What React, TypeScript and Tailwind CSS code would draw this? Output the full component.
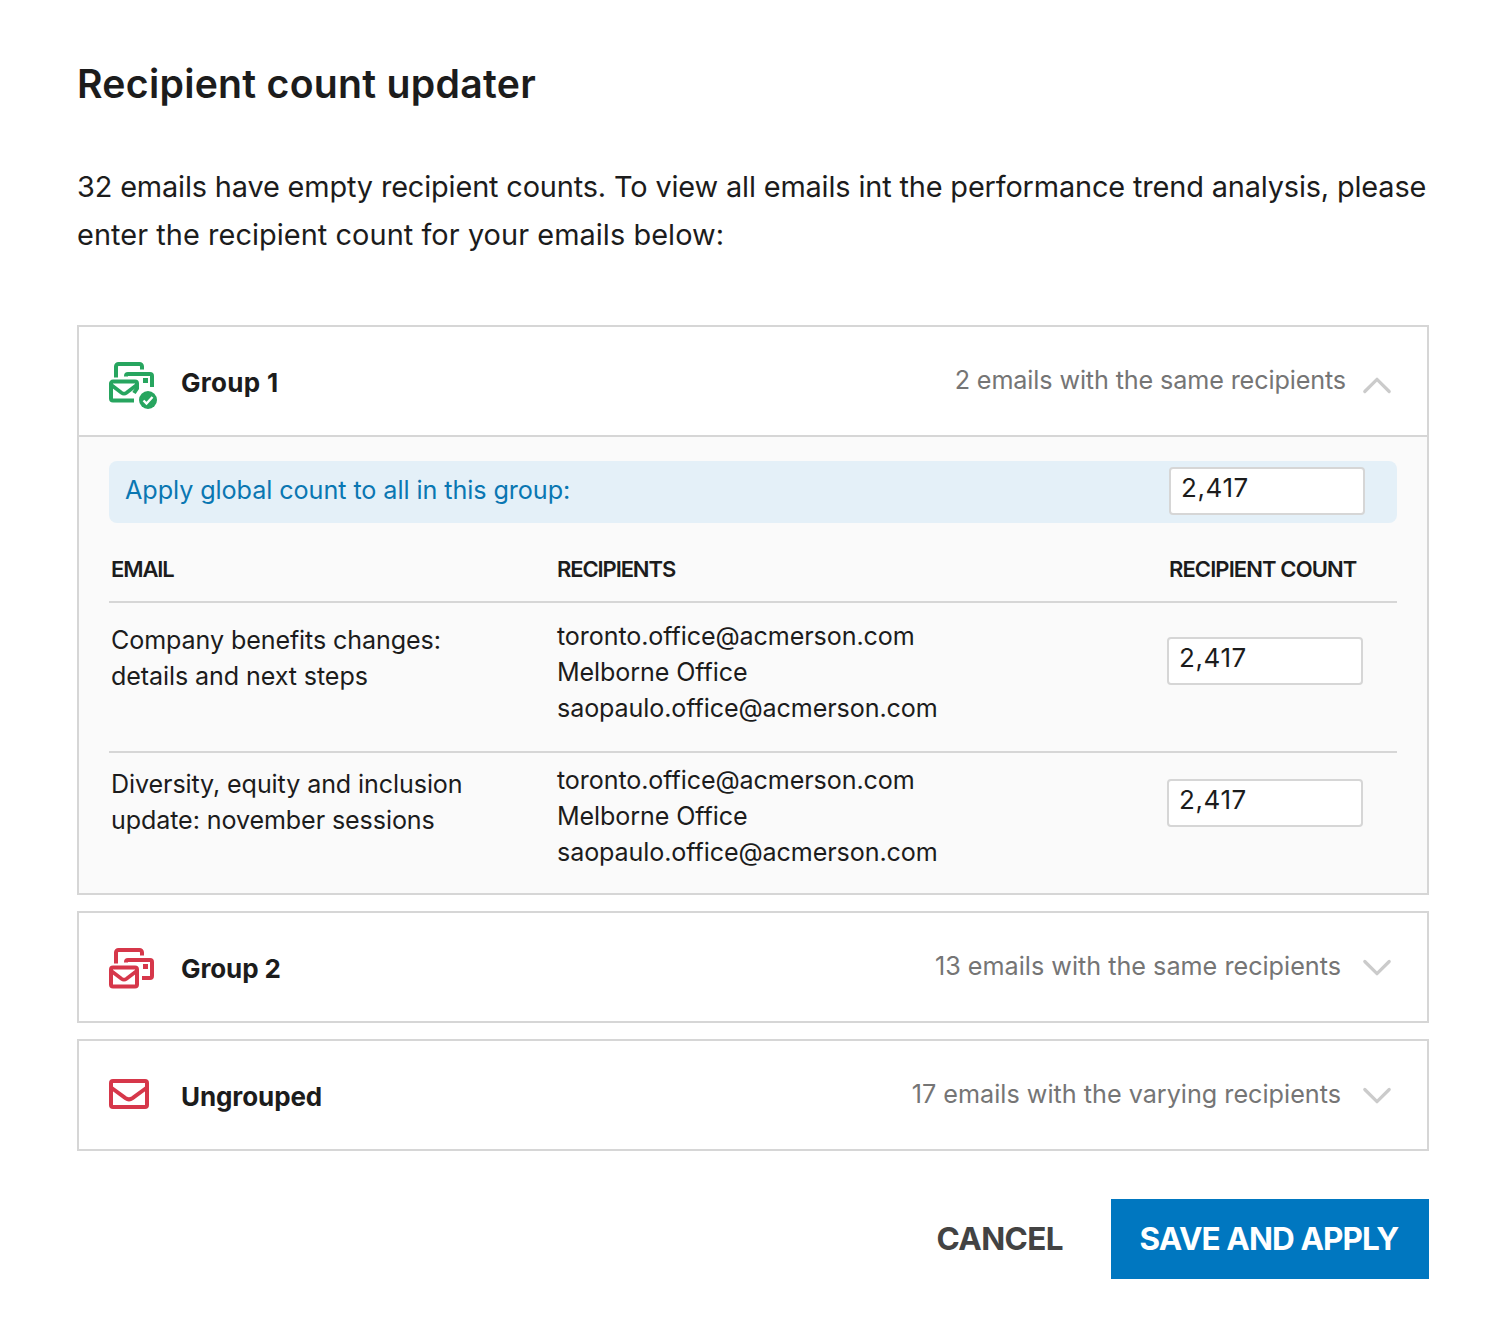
import React from "react";

const borderColor = "border-[#d6d6d6]"; // shared outline color

const recipients = [
  "toronto.office@acmerson.com",
  "Melborne Office",
  "saopaulo.office@acmerson.com",
];

const emails = [
  {
    title: ["Company benefits changes:", "details and next steps"],
    count: "2,417",
    row: "h-[150px] border-b-2 pt-[15px]",
    input: "mt-[19px]",
  },
  {
    title: ["Diversity, equity and inclusion", "update: november sessions"],
    count: "2,417",
    row: "h-[140px] pt-[9px]",
    input: "mt-[17px]",
  },
];

const MailStackIcon = ({ done = false }: { done?: boolean }) => (
  <svg
    width="50"
    height="48"
    viewBox="0 0 50 48"
    fill="none"
    stroke={done ? "#27a55f" : "#d6374a"}
    strokeWidth="4"
  >
    <path d="M7 15.5V4.5A2.5 2.5 0 0 1 9.500 2H30.500A2.500 2.500 0 0 1 33 4.500V7.500" />
    {done ? (
      <>
        <path d="M17 14.500V14A2 2 0 0 1 19 12H41A2 2 0 0 1 43 14V25" />
        <path d="M25 38.500H4A2 2 0 0 1 2 36.500V21.500A2 2 0 0 1 4 19.500H26A2 2 0 0 1 28 21.500V26.500L25 31" />
        <circle cx="39" cy="38" r="9" fill="#27a55f" stroke="none" />
        <path d="M34.500 38.500L37.500 41.500L43.500 35" stroke="#fff" strokeWidth="2.4" />
      </>
    ) : (
      <>
        <path d="M17 14.500V14A2 2 0 0 1 19 12H41A2 2 0 0 1 43 14V28A2 2 0 0 1 41 30H33" />
        <rect x="2" y="19.500" width="26" height="19" rx="2" />
      </>
    )}
    <path d="M3 23.500L12.500 30.800Q15 32.600 17.500 30.800L27 23.500" strokeWidth="3.600" />
    <rect x="34" y="16" width="5" height="5" fill={done ? "#27a55f" : "#d6374a"} stroke="none" />
  </svg>
);

const MailIcon = () => (
  <svg width="40" height="30" viewBox="0 0 40 30" fill="none" stroke="#d6374a" strokeWidth="4">
    <rect x="2" y="2" width="36" height="26" rx="2" />
    <path d="M2 8.500L16.500 19.200Q20 21.600 23.500 19.200L38 8.500" />
  </svg>
);

const Chevron = ({ up = false }: { up?: boolean }) => (
  <svg
    width="30"
    height="18"
    viewBox="0 0 30 18"
    fill="none"
    stroke="#cbcbcb"
    strokeWidth="3.2"
    strokeLinecap="round"
    strokeLinejoin="round"
    className={up ? "mt-[7px] rotate-180" : "mt-0.5"}
  >
    <path d="M2.800 2.500L15 14.700L27.200 2.500" />
  </svg>
);

const CountInput = ({ value, className = "" }: { value: string; className?: string }) => (
  <div
    className={`h-12 w-[196px] rounded-[4px] border-2 bg-white pl-2.5 text-[26px] leading-[38px] tracking-[0.6px] ${borderColor} ${className}`}
  >
    {value}
  </div>
);

type HeaderProps = {
  icon: React.ReactNode;
  title: string;
  summary: string;
  open?: boolean;
};

const GroupHeader = ({ icon, title, summary, open = false }: HeaderProps) => (
  <div className="flex h-[108px] items-center pr-[35px] pl-[30px]">
    <div className="w-[72px] shrink-0">{icon}</div>
    <h2 className={`mt-[3px] text-[26px] leading-9 font-bold ${open ? "tracking-[0.3px]" : "tracking-[-0.1px]"}`}>
      {title}
    </h2>
    <div className={`ml-auto flex items-center ${open ? "gap-4" : "gap-[21px]"}`}>
      <span
        className={`mt-[-3px] text-[25.2px] leading-9 whitespace-nowrap text-[#757575] ${open ? "tracking-[-0.13px]" : ""}`}
      >
        {summary}
      </span>
      <Chevron up={open} />
    </div>
  </div>
);

const App = () => {
  return (
    <main className="min-h-[1326px] w-[1508px] bg-white pt-[60px] pr-[79px] pl-[77px] font-['Inter',sans-serif] font-normal text-[#1c1c1c]">
      <h1 className="text-[39.2px] leading-[48px] font-semibold tracking-[0.27px]">Recipient count updater</h1>

      <p className="mt-[55px] text-[28.9px] leading-[48px] tracking-[-0.15px] whitespace-nowrap">
        32 emails have empty recipient counts. To view all emails int the performance trend analysis, please
        <br />
        <span className="tracking-[0.06px]">enter the recipient count for your emails below:</span>
      </p>

      <div className="mt-[66px] flex flex-col gap-4">
        {/* Expanded group */}
        <section className={`h-[570px] border-2 ${borderColor}`}>
          <GroupHeader
            icon={<div className="pt-2.5"><MailStackIcon done /></div>}
            title="Group 1"
            summary="2 emails with the same recipients"
            open
          />
          <div className={`h-[458px] border-t-2 bg-[#fafafa] px-[30px] pt-6 ${borderColor}`}>
            <div className="flex h-[62px] items-center justify-between rounded-lg bg-[#e4f0f8] pr-8 pl-4">
              <span className="mb-1 text-[25.2px] leading-9 tracking-[-0.08px] text-[#0a77b2]">
                Apply global count to all in this group:
              </span>
              <CountInput value="2,417" className="mt-[-2px]" />
            </div>

            <div
              className={`grid h-20 grid-cols-[446px_612px_1fr] items-center border-b-2 pt-3.5 pl-0.5 text-[22px] font-semibold tracking-[-1.1px] ${borderColor}`}
            >
              <span>EMAIL</span>
              <span>RECIPIENTS</span>
              <span className="tracking-[-0.9px] whitespace-nowrap">RECIPIENT COUNT</span>
            </div>

            {emails.map((email, index) => (
              <div
                key={index}
                className={`grid grid-cols-[446px_610px_1fr] items-start pl-0.5 text-[25.1px] leading-9 tracking-[-0.1px] ${borderColor} ${email.row}`}
              >
                <div className="mt-1">
                  {email.title.map((line) => (
                    <p key={line}>{line}</p>
                  ))}
                </div>
                <div>
                  {recipients.map((recipient) => (
                    <p key={recipient}>{recipient}</p>
                  ))}
                </div>
                <CountInput value={email.count} className={email.input} />
              </div>
            ))}
          </div>
        </section>

        <section className={`border-2 ${borderColor}`}>
          <GroupHeader
            icon={<div className="pt-2.5"><MailStackIcon /></div>}
            title="Group 2"
            summary="13 emails with the same recipients"
          />
        </section>

        <section className={`border-2 ${borderColor}`}>
          <GroupHeader
            icon={<div className="pb-0.5"><MailIcon /></div>}
            title="Ungrouped"
            summary="17 emails with the varying recipients"
          />
        </section>
      </div>

      <div className="mt-12 flex items-center justify-end gap-12 text-[31.5px] font-bold">
        <button className="tracking-[-0.6px] text-[#434343]">CANCEL</button>
        <button className="h-20 w-[318px] bg-[#0077c0] pr-0.5 tracking-[-0.9px] whitespace-nowrap text-white">
          SAVE AND APPLY
        </button>
      </div>
    </main>
  );
};

export default App;
